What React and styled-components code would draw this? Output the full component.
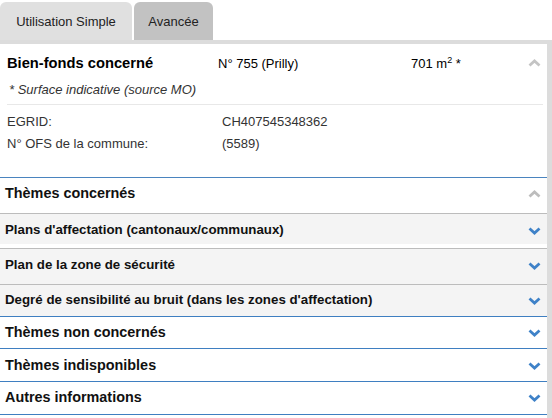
import React from 'react';
import styled, { createGlobalStyle } from 'styled-components';

const Global = createGlobalStyle`
  body {
    margin: 0;
    background: #fff;
    font-family: "Liberation Sans", Arial, sans-serif;
    color: #000;
  }
`;

const Page = styled.div`
  width: 552px;
  height: 418px;
  overflow: hidden;
`;

const Tabs = styled.div`
  display: flex;
  gap: 2px;
  padding-top: 2px;
  height: 38px;
`;

const Tab = styled.div`
  display: flex;
  align-items: center;
  justify-content: center;
  width: ${p => p.w}px;
  background: ${p => (p.active ? '#e0e0e0' : '#c2c2c2')};
  border-radius: 6px 6px 0 0;
  font-size: 13px;
  color: #222;
  padding-top: 1px;
`;

const Panel = styled.div`
  border-top: 4px solid #dcdcdc;
  border-right: 5px solid #dcdcdc;
  min-height: 400px;
`;

const Summary = styled.div`
  padding: 10px 0 0 0;
  height: 123px;
`;

const TopRow = styled.div`
  display: flex;
  align-items: center;
  height: 18px;
  padding-left: 7px;
  padding-right: 6px;
`;

const Title = styled.div`
  width: 211px;
  font-weight: bold;
  font-size: 14.7px;
`;

const Value = styled.div`
  width: ${p => p.w}px;
  flex: ${p => (p.grow ? 1 : 'none')};
  font-size: 13px;
`;

const Note = styled.div`
  font-style: italic;
  font-size: 13px;
  color: #333;
  padding: 10px 0 0 9px;
  height: 18px;
`;

const Sep = styled.div`
  margin: 4px 4px 0 7px;
  border-top: 1px solid #e8e8e8;
`;

const Details = styled.div`
  display: grid;
  grid-template-columns: 215px 1fr;
  row-gap: 7px;
  padding: 9px 0 0 7px;
  font-size: 13px;
  color: #333;
`;

const Section = styled.div`
  display: flex;
  align-items: flex-start;
  justify-content: space-between;
  height: ${p => p.h || 32}px;
  padding: ${p => p.pt || 7}px 6px 0 5px;
  box-sizing: border-box;
  border-top: 1px solid ${p => p.line || '#3f7fc1'};
  background: ${p => p.bg || '#fff'};
  font-weight: bold;
  font-size: ${p => p.fs || 14.4}px;
  line-height: 16px;
  color: #111;
  margin-bottom: ${p => p.gap || 0}px;

  svg {
    margin-top: 5px;
  }
`;

const Chevron = ({ up, color }) => (
  <svg width="13" height="8" viewBox="0 0 13 8">
    <polyline
      points={up ? '1.5,6.5 6.5,2 11.5,6.5' : '1.5,1.5 6.5,6 11.5,1.5'}
      fill="none"
      stroke={color}
      strokeWidth="2.8"
      strokeLinecap="butt"
      strokeLinejoin="miter"
    />
  </svg>
);

const App = () => {
  const subs = [
    { t: "Plans d'affectation (cantonaux/communaux)", h: 31, gap: 4, pt: 8 },
    { t: 'Plan de la zone de sécurité', h: 36, pt: 8 },
    { t: "Degré de sensibilité au bruit (dans les zones d'affectation)", h: 32, pt: 7 },
  ];
  const groups = [
    { t: 'Thèmes non concernés', h: 32, pt: 7 },
    { t: 'Thèmes indisponibles', h: 33, pt: 8 },
    { t: 'Autres informations', h: 33, pt: 7 },
  ];
  return (
    <Page>
      <Global />
      <Tabs>
        <Tab w={132} active>Utilisation Simple</Tab>
        <Tab w={79}>Avancée</Tab>
      </Tabs>
      <Panel>
        <Summary>
          <TopRow>
            <Title>Bien-fonds concerné</Title>
            <Value w={193}>N° 755 (Prilly)</Value>
            <Value grow>
              701 m<sup style={{ fontSize: 9 }}>2</sup> *
            </Value>
            <Chevron up color="#c4c4c4" />
          </TopRow>
          <Note>* Surface indicative (source MO)</Note>
          <Sep />
          <Details>
            <span>EGRID:</span>
            <span>CH407545348362</span>
            <span>N° OFS de la commune:</span>
            <span>(5589)</span>
          </Details>
        </Summary>
        <Section h={36} pt={7} line="#4a84bf">
          Thèmes concernés
          <Chevron up color="#bdbdbd" />
        </Section>
        {subs.map(s => (
          <Section key={s.t} h={s.h} pt={s.pt} gap={s.gap} fs={13.3} bg="#f4f4f4" line="#bcbcbc">
            {s.t}
            <Chevron color="#3f82c8" />
          </Section>
        ))}
        {groups.map(g => (
          <Section key={g.t} h={g.h} pt={g.pt}>
            {g.t}
            <Chevron color="#3f82c8" />
          </Section>
        ))}
        <Section h={4} />
      </Panel>
    </Page>
  );
};

export default App;
